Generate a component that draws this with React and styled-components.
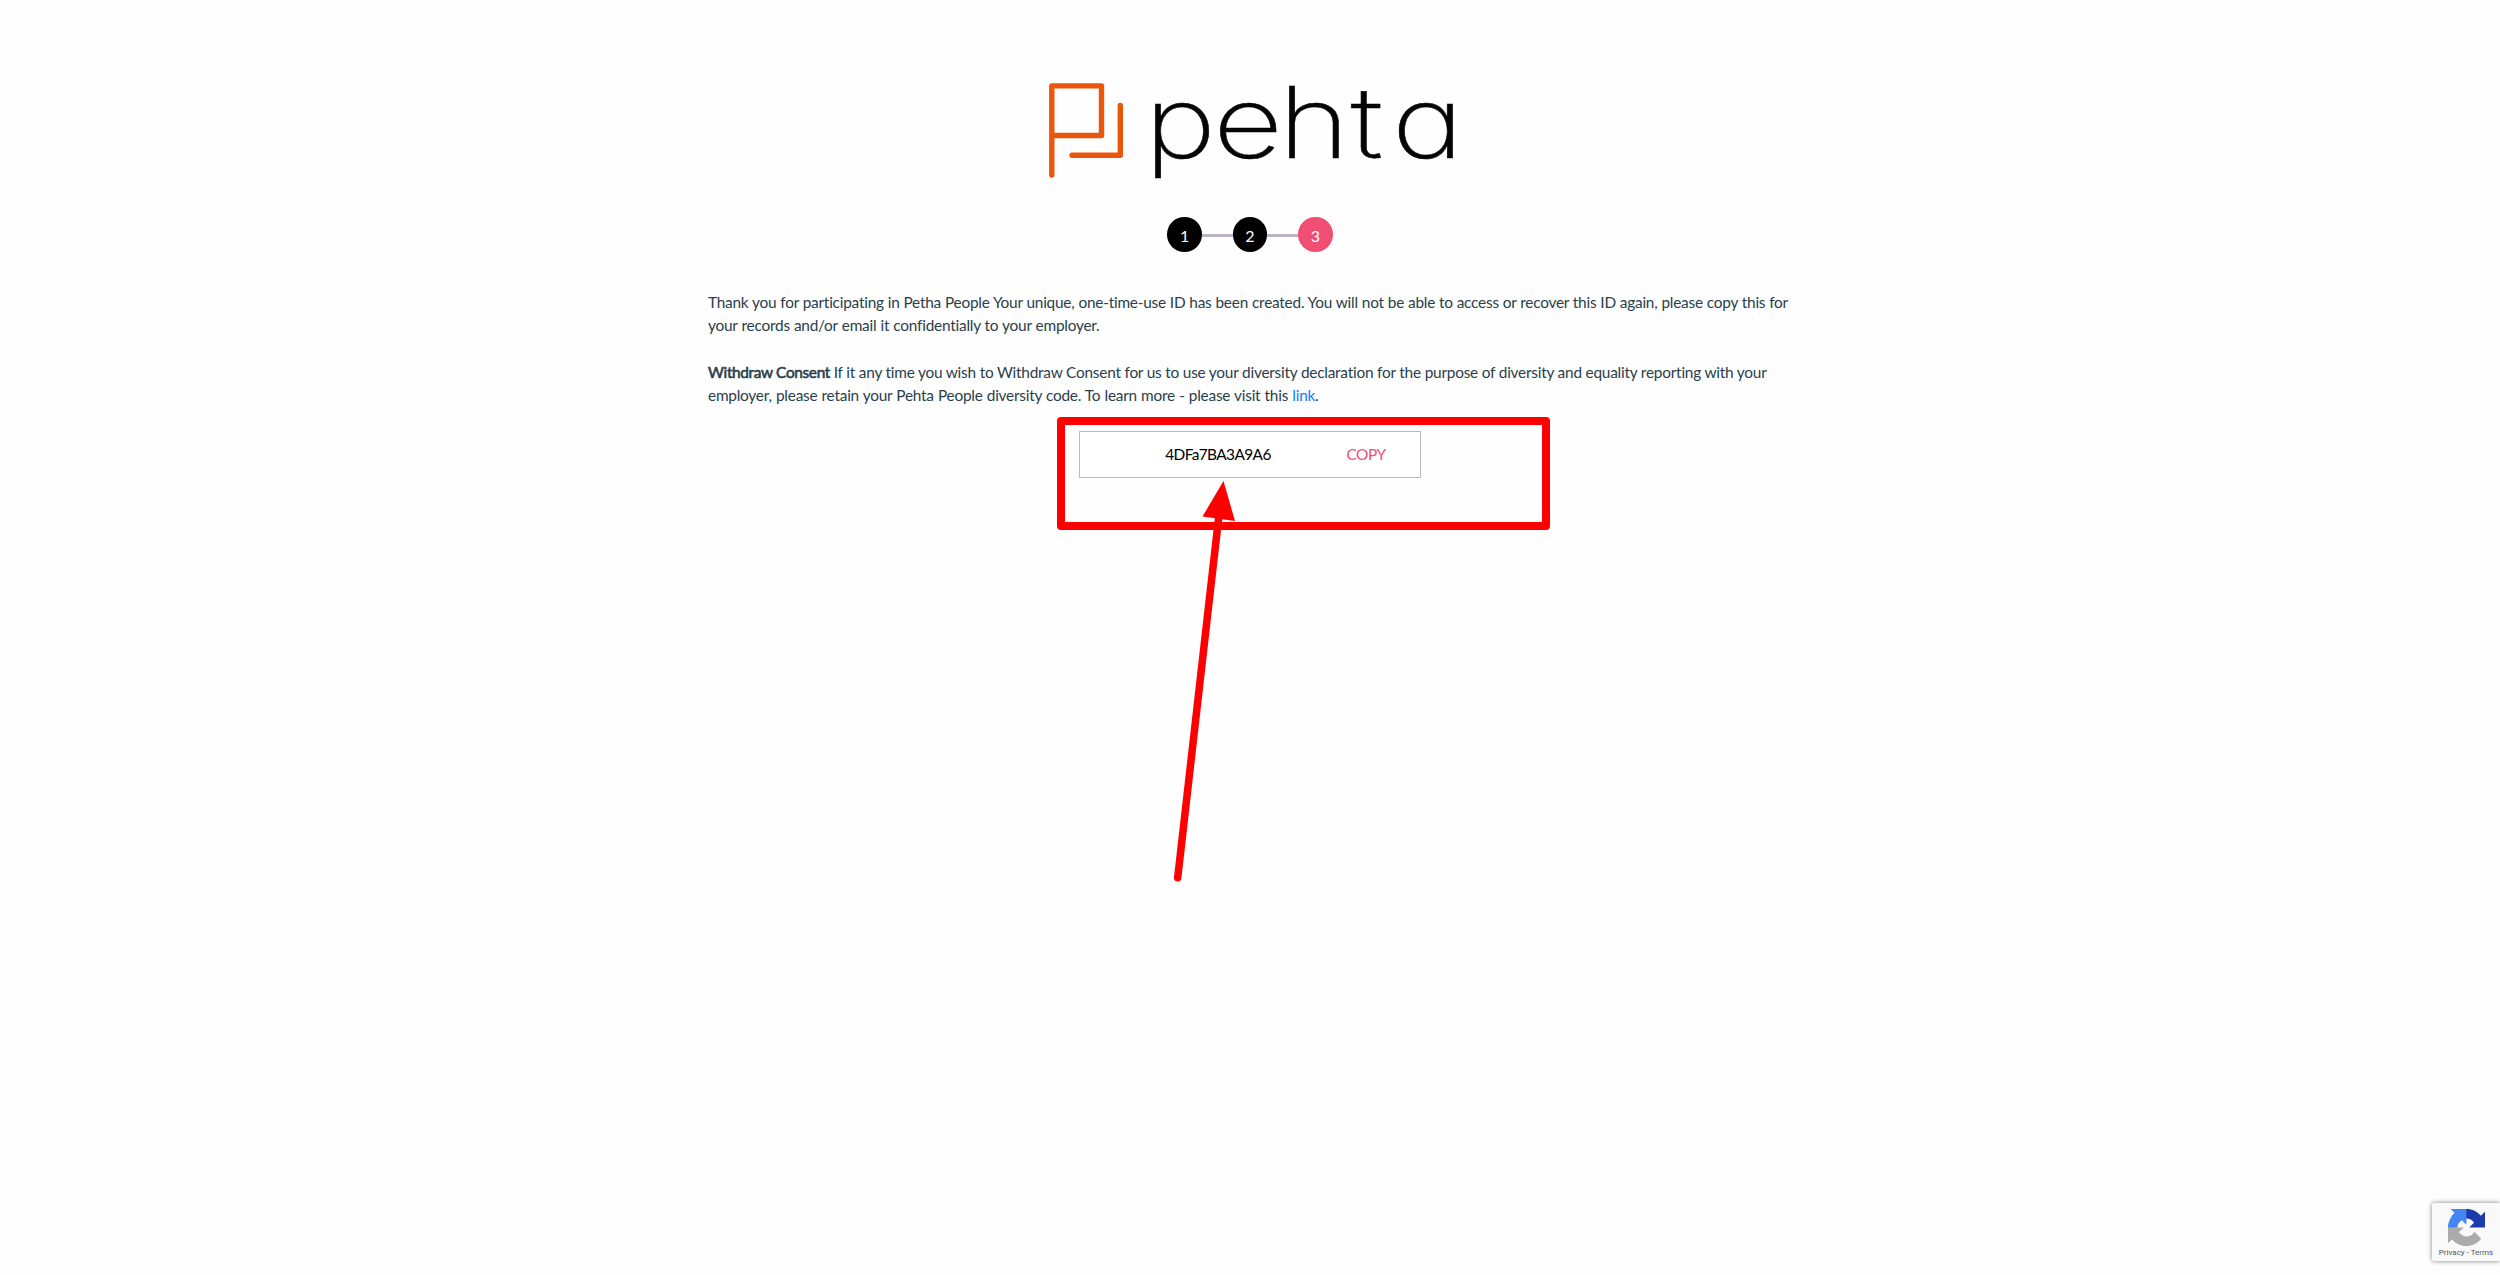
import React from "react";
import styled, { createGlobalStyle } from "styled-components";

const Colors = {
  text: "#2a3f4c",
  pink: "#f04e73",
  orange: "#e9560c",
  link: "#0f7cff",
  marker: "#ff0000",
};

const GlobalStyle = createGlobalStyle`
  * {
    box-sizing: border-box;
  }

  body {
    margin: 0;
    background: #fefefe;
    color: ${Colors.text};
    font-family: Lato, "Open Sans", sans-serif;
    font-size: 15.4px;
    line-height: 23.45px;
  }
`;

const Page = styled.main`
  position: relative;
  display: flex;
  flex-direction: column;
  align-items: center;
  height: 1275px;
  padding-top: 40px;
  overflow: hidden;
`;

const LogoSvg = styled.svg`
  display: block;
  width: 440px;
  height: 160px;
`;

const Wordmark = styled.text`
  font-family: Inter, sans-serif;
  font-size: 99px;
  font-weight: 200;
  font-feature-settings: "cv11";
  fill: #050505;
  stroke: #050505;
  stroke-width: 0.5px;
`;

const Steps = styled.div`
  display: flex;
  align-items: center;
  margin-top: 17.4px;
`;

const Step = styled.div`
  display: flex;
  align-items: center;
  justify-content: center;
  width: 34.6px;
  height: 34.6px;
  padding-top: 2px;
  border-radius: 50%;
  background: ${(props) => (props.$active ? Colors.pink : "#000")};
  color: #fff;
  font-size: 16px;
`;

const StepLine = styled.div`
  width: 30.8px;
  height: 3px;
  margin-top: 2px;
  background: #bcb6c4;
`;

const Copy = styled.div`
  width: 1084px;
  margin-top: 38.6px;
`;

const Paragraph = styled.p`
  margin: 0 0 23.4px;
`;

const Line = styled.span`
  display: block;
  width: ${(props) => props.$width}px;
  white-space: nowrap;
  text-align-last: justify;
  letter-spacing: -0.23px;
`;

const Strong = styled.b`
  font-weight: 400;
  letter-spacing: -0.34px;
  -webkit-text-stroke: 0.6px ${Colors.text};
`;

const Link = styled.a`
  color: ${Colors.link};
  text-decoration: none;
`;

const CodeBox = styled.div`
  display: flex;
  align-items: center;
  width: 342px;
  height: 47px;
  border: 1px solid #b8bcbc;
  background: #fff;
`;

const Code = styled.span`
  width: 257px;
  margin-left: 9.5px;
  text-align: center;
  letter-spacing: -0.6px;
  color: #000;
`;

const CopyBtn = styled.button`
  padding: 0;
  border: 0;
  background: none;
  color: ${Colors.pink};
  font: inherit;
  letter-spacing: -0.5px;
`;

// marker drawn over the page, around and towards the code
const Highlight = styled.div`
  position: absolute;
  left: 1057px;
  top: 417px;
  width: 493px;
  height: 113px;
  border: 8px solid ${Colors.marker};
  border-radius: 4px;
`;

const ArrowSvg = styled.svg`
  position: absolute;
  left: 1150px;
  top: 470px;
  width: 120px;
  height: 420px;
`;

const Captcha = styled.aside`
  position: absolute;
  right: 0;
  bottom: 14px;
  width: 68px;
  height: 58px;
  display: flex;
  flex-direction: column;
  align-items: center;
  padding-top: 6px;
  border-radius: 2px 0 0 2px;
  background: #f9f9f9;
  box-shadow: 0 0 5px #808080;
`;

const CaptchaTerms = styled.span`
  margin-top: 2px;
  font-family: Roboto, sans-serif;
  font-size: 8px;
  line-height: 10px;
  white-space: nowrap;
  color: #555;
`;

const Logo = () => (
  <LogoSvg viewBox="0 -30 440 160">
    <g
      fill="none"
      stroke={Colors.orange}
      strokeWidth="5.4"
      strokeLinecap="round"
      strokeLinejoin="round"
    >
      <path d="M21.8 105V15.9H71.5V65.5H21.8" />
      <path d="M90.3 35.5V85.3H42" />
    </g>
    <Wordmark
      transform="scale(1.22 1)"
      y="88"
      x="93.8 150.2 203.8 262.8 296.8"
    >
      pehta
    </Wordmark>
  </LogoSvg>
);

const CaptchaIcon = () => (
  <svg width="37" height="37" viewBox="0 0 64 64">
    <path
      fill="#1c3aa9"
      d="m64 31.955-.033-1.37V4.687l-7.16 7.16C50.948 4.674 42.033.093 32.05.093c-10.389 0-19.622 4.96-25.458 12.64l11.736 11.86a15.55 15.55 0 0 1 4.754-5.334c2.05-1.6 4.952-2.906 8.968-2.906.485 0 .86.057 1.135.163 4.976.393 9.288 3.14 11.828 7.124l-8.307 8.307L64 31.953"
    />
    <path
      fill="#4285f4"
      d="m31.862.094-1.37.033H4.594l7.16 7.16C4.58 13.147 0 22.06 0 32.046c0 10.388 4.96 19.622 12.64 25.458L24.5 45.768a15.55 15.55 0 0 1-5.334-4.754c-1.6-2.05-2.906-4.952-2.906-8.968 0-.485.057-.86.163-1.135.393-4.976 3.14-9.288 7.124-11.828l8.307 8.307L31.86.095"
    />
    <path
      fill="#ababab"
      d="m.001 32.045.033 1.37v25.898l7.16-7.16c5.86 7.173 14.774 11.754 24.76 11.754 10.388 0 19.622-4.96 25.458-12.64l-11.736-11.86a15.55 15.55 0 0 1-4.754 5.334c-2.05 1.6-4.952 2.906-8.968 2.906-.485 0-.86-.057-1.135-.163-4.976-.393-9.288-3.14-11.828-7.124l8.307-8.307c-10.522.04-22.4.066-27.295-.005"
    />
  </svg>
);

function App() {
  return (
    <>
      <GlobalStyle />
      <Page>
        <Logo />
        <Steps>
          <Step>1</Step>
          <StepLine />
          <Step>2</Step>
          <StepLine />
          <Step $active>3</Step>
        </Steps>
        <Copy>
          <Paragraph>
            <Line $width={1080}>
              Thank you for participating in Petha People Your unique,
              one-time-use ID has been created. You will not be able to access
              or recover this ID again, please copy this for
            </Line>
            <Line $width={391.5}>
              your records and/or email it confidentially to your employer.
            </Line>
          </Paragraph>
          <Paragraph>
            <Line $width={1058.5}>
              <Strong>Withdraw Consent</Strong> If it any time you wish to
              Withdraw Consent for us to use your diversity declaration for the
              purpose of diversity and equality reporting with your
            </Line>
            <Line $width={610.5}>
              employer, please retain your Pehta People diversity code. To
              learn more - please visit this <Link href="#">link</Link>.
            </Line>
          </Paragraph>
        </Copy>
        <CodeBox>
          <Code>4DFa7BA3A9A6</Code>
          <CopyBtn>COPY</CopyBtn>
        </CodeBox>
        <Highlight />
        <ArrowSvg viewBox="0 0 120 420">
          <path
            d="M27.7 407.7L68.5 49"
            stroke={Colors.marker}
            strokeWidth="7.5"
            strokeLinecap="round"
          />
          <path d="M73.5 11L85 51L52.5 46.5Z" fill={Colors.marker} />
        </ArrowSvg>
        <Captcha>
          <CaptchaIcon />
          <CaptchaTerms>Privacy - Terms</CaptchaTerms>
        </Captcha>
      </Page>
    </>
  );
}

export default App;
